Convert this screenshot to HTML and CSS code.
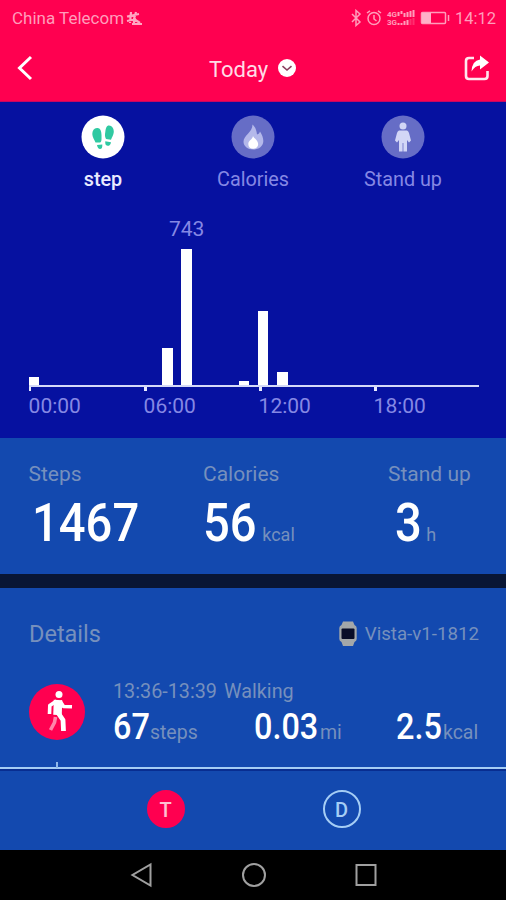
FILE: index.html
```
<!DOCTYPE html>
<html lang="en">
<head>
    <meta charset="UTF-8">
    <meta name="viewport" content="width=device-width, initial-scale=1.0">
    <title>Today</title>
    <link rel="stylesheet" href="styles.css">
</head>
<body>
    <header class="header">
        <div class="statusbar">
            <span class="carrier">China Telecom</span>
            <svg class="carrier-icon" width="17" height="15" viewBox="0 0 17 15">
                <path d="M1 5.500 L13 3 M5 1 L4 12 M10 1 L8 8 L14 12 M1 10 L10 8 M6 13 L16 13 M8 9 L8 13" />
            </svg>
            <svg class="status-icons" width="102" height="18" viewBox="0 0 102 18">
                <path d="M2 5 L10 13 L6 16.5 V1.500 L10 5 L2 13" />
                <circle cx="24" cy="9.500" r="6" />
                <path d="M24 6 V10 L26.500 12 M17 4 L20 1.800 M28 1.800 L31 4" />
                <text x="37" y="8">4G</text>
                <text x="37" y="16">3G</text>
                <path class="bars" d="M48.500 3 V7 M51.500 2 V5 M54.500 4 V8 M57.500 3 V8 M60.500 2 V8 M63.500 1 V8 M48.500 14 V16 M51.500 14 V16 M54.500 12 V16 M57.500 11 V16" />
                <path class="bars dim" d="M60.500 10 V16 M63.500 9 V16" />
                <rect x="71.500" y="3.500" width="24" height="11" rx="1" />
                <rect class="charge" x="72" y="4" width="9" height="10" />
                <path d="M98.500 6 V12" />
            </svg>
            <span class="clock">14:12</span>
        </div>
        <div class="titlebar">
            <svg width="18" height="28" viewBox="0 0 18 28">
                <path class="back" d="M15 3 L3.500 14 L15 25" />
            </svg>
            <div class="title">
                <span>Today</span>
                <svg width="18" height="18" viewBox="0 0 18 18">
                    <circle cx="9" cy="9" r="9" fill="#fff" />
                    <path class="chevron" d="M4.500 7.200 L9 11 L13.500 7.200" />
                </svg>
            </div>
            <svg width="28" height="28" viewBox="0 0 28 28">
                <path class="share-box" d="M11 4 H6 Q3 4 3 7 V22 Q3 25 6 25 H21.500 Q24.500 25 24.500 22 V17" />
                <path class="share-arrow" d="M17 1.500 L26 8.500 L17 15.500 V11.500 Q12 11.500 8.500 17.500 Q9 6.500 17 5.500 Z" />
            </svg>
        </div>
    </header>

    <section class="activity">
        <div class="tabs">
            <div class="tab active">
                <svg width="44" height="44" viewBox="0 0 44 44">
                    <circle cx="22" cy="22" r="21.500" fill="#fff" />
                    <g class="feet">
                        <path d="M16 13 C19 12.500 20.500 16 20.500 20 C20.500 23 21 27 19 27.500 H14.500 C13.500 25 11.300 22 11.300 19 C11.300 15.500 13 13.300 16 13 Z" />
                        <path d="M28 10.500 C31 10.700 33 13.500 32.800 17 C32.600 20 31 22 30 24.800 L25 24 C23.500 21 24 19 24.300 17 C24.800 13 25.500 10.500 28 10.500 Z" />
                        <path d="M16 30 L21.300 29.500 C21.500 32.500 20.700 34 19 34 C17.500 34 16.500 32.500 16 30 Z" />
                        <path d="M24.300 26.300 L30 27.200 C29.500 30 28 31 26.500 30.800 C24.500 30.500 24 29 24.300 26.300 Z" />
                    </g>
                </svg>
                <span>step</span>
            </div>
            <div class="tab">
                <svg width="44" height="44" viewBox="0 0 44 44">
                    <circle class="disc" cx="22" cy="22" r="21.500" />
                    <path class="flame" d="M21.500 9.500 C24.500 12 25.500 15.500 26 19.500 C27.800 19 28.500 18 29 16.500 C31 19.500 32.500 23 32.300 26.500 C32 31.500 27.500 34.500 22.500 34.500 C16.500 34.500 12.500 31 12.500 26.500 C12.500 20.500 21.500 17.500 21.500 9.500 Z" />
                    <path class="flame-core" d="M22 21 C22.500 23 27 25 27.200 29 C27.200 32 25 33.800 22.200 33.800 C19 33.800 17.300 31.800 17.300 29 C17.300 25.500 21.500 24.500 22 21 Z" />
                </svg>
                <span>Calories</span>
            </div>
            <div class="tab">
                <svg width="44" height="44" viewBox="0 0 44 44">
                    <circle class="disc" cx="22" cy="22" r="21.500" />
                    <g class="person">
                        <circle cx="22" cy="11" r="3.500" />
                        <path d="M18 15.500 H26 Q27.500 16 28 18 L30 25.500 L28 27.500 L26 25 V36.500 H22.400 V28 H21.600 V36.500 H18 V25 L16 27.500 L14 25.500 L16 18 Q16.500 16 18 15.500 Z" />
                    </g>
                </svg>
                <span>Stand up</span>
            </div>
        </div>
        <div class="chart">
            <div class="bars-row" id="bars"></div>
            <div class="axis">
                <span>00:00</span>
                <span>06:00</span>
                <span>12:00</span>
                <span>18:00</span>
            </div>
        </div>
    </section>

    <section class="summary">
        <div class="stat">
            <span class="label">Steps</span>
            <div class="value first"><b>1467</b></div>
        </div>
        <div class="stat">
            <span class="label">Calories</span>
            <div class="value"><b>56</b><i>kcal</i></div>
        </div>
        <div class="stat">
            <span class="label">Stand up</span>
            <div class="value last"><b>3</b><i>h</i></div>
        </div>
    </section>

    <section class="details">
        <div class="details-head">
            <h2>Details</h2>
            <div class="device">
                <svg width="18" height="26" viewBox="0 0 18 26">
                    <path d="M4 0.500 H14 L15.500 4 Q17.700 5 17.700 7 V18 Q17.700 20 15.500 21 L14 25 H4 L2.500 21 Q0.300 20 0.300 18 V7 Q0.300 5 2.500 4 Z" fill="#a3a7a9" />
                    <rect x="2.500" y="7.500" width="13" height="10.500" rx="1" fill="#080d28" />
                </svg>
                <span>Vista-v1-1812</span>
            </div>
        </div>
        <div class="entry">
            <div class="entry-icon">
                <svg width="56" height="56" viewBox="0 0 56 56">
                    <circle cx="28" cy="28" r="28" fill="#ff0050" />
                    <circle cx="30" cy="10.500" r="3.500" fill="#fff" />
                    <path class="leg-back" d="M26.500 33 L25.500 38.500 L21.500 46" />
                    <path class="leg" d="M28.500 28 L34 36 L34.500 47" />
                    <path class="torso" d="M29 16 L28.500 31" />
                    <path class="arm" d="M27.500 17 L20.800 21.500 L20.500 30 M31 17 L34.500 22.500 L43 22.800" />
                </svg>
            </div>
            <div class="entry-body">
                <div class="entry-time">13:36-13:39<span>Walking</span></div>
                <div class="entry-values">
                    <div class="small-value steps"><b>67</b><i>steps</i></div>
                    <div class="small-value miles"><b>0.03</b><i>mi</i></div>
                    <div class="small-value kcal"><b>2.5</b><i>kcal</i></div>
                </div>
            </div>
        </div>
        <div class="timeline"></div>
    </section>

    <footer class="switcher">
        <span class="round selected">T</span>
        <span class="round">D</span>
    </footer>

    <nav class="navbar">
        <svg width="24" height="26" viewBox="0 0 24 26">
            <path d="M20.500 2.500 V23.500 L2.500 13 Z" />
        </svg>
        <svg width="26" height="26" viewBox="0 0 26 26">
            <circle cx="13" cy="13" r="11" />
        </svg>
        <svg width="24" height="26" viewBox="0 0 24 26">
            <rect x="2.500" y="3" width="19" height="20" />
        </svg>
    </nav>

    <script>
        const bars = document.getElementById('bars');
        const steps = { 0: 46, 7: 204, 8: 743, 11: 23, 12: 402, 13: 69 };
        const best = Math.max(...Object.values(steps));
        for (let hour = 0; hour < 24; hour++) {
            const bar = document.createElement('div');
            bar.className = 'bar';
            bar.style.height = `${(steps[hour] || 0) / best * 100}%`;
            if (steps[hour] === best) {
                bar.innerHTML = `<span class="bar-label">${best}</span>`;
            }
            bars.appendChild(bar);
        }
    </script>
</body>
</html>
```
FILE: styles.css
```
* {
    box-sizing: border-box;
}
body {
    margin: 0;
    width: 506px;
    height: 900px;
    overflow: hidden;
    font-family: Roboto, "Liberation Sans", sans-serif;
    background-color: #1349af;
    color: #fff;
}
svg {
    display: block;
    flex: none;
    fill: none;
}
b {
    font-weight: 500;
}
i {
    font-style: normal;
}
.header {
    height: 102px;
    background-color: #ff0050;
    border-bottom: 1px solid #c50862;
}
.statusbar {
    display: flex;
    align-items: center;
    height: 36px;
    padding: 0 10px 0 12px;
    color: #ff9dbb;
    font-size: 17px;
}
.carrier-icon {
    margin-left: 2px;
    stroke: #ffa5c1;
    stroke-width: 2.2;
}
.status-icons {
    margin-left: auto;
    stroke: #ff9dbb;
    stroke-width: 1.5;
}
.status-icons text {
    fill: #ff9dbb;
    stroke: none;
    font-size: 8px;
    font-weight: 700;
}
.status-icons .bars {
    stroke-width: 2;
}
.status-icons .dim {
    opacity: 0.3;
}
.status-icons .charge {
    fill: #ffb0c8;
    stroke: none;
}
.clock {
    width: 41px;
    margin-left: 3px;
    font-size: 16.5px;
}
.titlebar {
    display: flex;
    align-items: center;
    justify-content: space-between;
    height: 64px;
    padding: 0 15px 0 16px;
}
.title {
    display: flex;
    align-items: center;
    gap: 10px;
    margin-left: 8px;
    font-size: 22px;
    color: #ffdce6;
}
.title span {
    padding-top: 3px;
}
.back {
    stroke: #fff;
    stroke-width: 3;
}
.chevron {
    stroke: #8a4060;
    stroke-width: 1.6;
}
.share-box {
    stroke: #ffe6ee;
    stroke-width: 2.6;
}
.share-arrow {
    fill: #fff;
}
.activity {
    height: 336px;
    padding: 13px 28px 0;
    background-color: #0611a0;
}
.tabs {
    display: grid;
    grid-template-columns: repeat(3, 1fr);
}
.tab {
    display: flex;
    flex-direction: column;
    align-items: center;
    gap: 9px;
    font-size: 19.8px;
    line-height: 24px;
    color: #8588e4;
}
.tab.active {
    color: #e9ebff;
    font-weight: 500;
}
.feet {
    fill: #2fc9a1;
}
.disc {
    fill: #666dc6;
}
.flame {
    fill: #b4b8ea;
}
.flame-core {
    fill: #fff;
}
.person {
    fill: #d2d6f6;
}
.chart {
    width: 450px;
    margin-left: 0.6px;
    padding-top: 57px;
}
.bars-row {
    display: grid;
    grid-template-columns: repeat(24, 1fr);
    column-gap: 8.6px;
    align-items: end;
    height: 136px;
}
.bar {
    position: relative;
    background-color: #fff;
}
.bar-label {
    position: absolute;
    bottom: 100%;
    left: 50%;
    transform: translateX(-50%);
    margin-bottom: 8px;
    font-size: 21px;
    color: #8588e4;
}
.axis {
    display: grid;
    grid-template-columns: repeat(4, 115px);
    width: 450px;
    border-top: 2px solid #d5d9f8;
    font-size: 21px;
    line-height: 24px;
    color: #8588e4;
}
.axis span::before {
    content: "";
    display: block;
    width: 3px;
    height: 4px;
    margin-bottom: 3px;
    background-color: #e9ebff;
}
.axis span:first-child::before {
    width: 2px;
}
.summary {
    display: grid;
    grid-template-columns: 174.5px 185px 1fr;
    height: 136px;
    padding: 23px 0 0 28.5px;
}
.label {
    display: block;
    font-size: 21px;
    line-height: 26px;
    color: #7690bd;
}
.value {
    display: flex;
    align-items: baseline;
    height: 60px;
    margin-top: 6px;
    line-height: 60px;
}
.value b {
    font-size: 53px;
    transform: scaleX(0.89);
    transform-origin: left;
}
.value i {
    margin-left: -1px;
    font-size: 18px;
    color: #7690bd;
}
.value.first {
    padding-left: 3px;
}
.value.last {
    padding-left: 7px;
}
.value.last i {
    margin-left: 1px;
}
.details {
    border-top: 14px solid #091635;
    height: 195px;
}
.details-head {
    display: flex;
    align-items: center;
    justify-content: space-between;
    height: 91px;
    padding: 0 27px 0 29px;
    color: #7690bd;
}
.details-head h2 {
    margin: 0;
    font-size: 23.5px;
    font-weight: 400;
}
.device {
    display: flex;
    align-items: center;
    gap: 8px;
    font-size: 18.7px;
}
.entry {
    display: flex;
    gap: 28px;
    height: 83px;
    padding: 0 27px 0 29px;
}
.entry-icon {
    padding-top: 5px;
}
.leg-back {
    stroke: #ff86ab;
    stroke-width: 3.6;
}
.leg {
    stroke: #fff;
    stroke-width: 4.8;
    stroke-linejoin: round;
}
.torso {
    stroke: #fff;
    stroke-width: 8.5;
}
.arm {
    stroke: #fff;
    stroke-width: 3.6;
    stroke-linejoin: round;
}
.entry-body {
    flex: 1;
    color: #7690bd;
}
.entry-time {
    font-size: 19.8px;
    line-height: 26px;
}
.entry-time span {
    margin-left: 7px;
}
.entry-values {
    display: grid;
    grid-template-columns: 141px 142px 1fr;
    line-height: 44px;
}
.small-value {
    display: flex;
    align-items: baseline;
    font-size: 19.5px;
    white-space: nowrap;
}
.small-value b {
    font-size: 36px;
    color: #fff;
    transform: scaleX(0.9);
    transform-origin: left;
}
.small-value i {
    margin-left: -4px;
}
.small-value.miles i {
    margin-left: -5.5px;
}
.timeline {
    height: 7px;
    border-bottom: 2px solid #a5cdf5;
}
.timeline::before {
    content: "";
    display: block;
    width: 2px;
    height: 6px;
    margin-left: 56px;
    background-color: #8fb8ea;
}
.switcher {
    display: flex;
    justify-content: center;
    gap: 138px;
    height: 81px;
    padding: 19px 0 0 1px;
    border-top: 2px solid #082d90;
}
.round {
    width: 38px;
    height: 38px;
    border: 2px solid #a5cdf5;
    border-radius: 50%;
    color: #a5cdf5;
    font-size: 20px;
    font-weight: 500;
    line-height: 36px;
    text-align: center;
}
.round.selected {
    border-color: #ff0050;
    background-color: #ff0050;
    color: #ffc0d2;
}
.navbar {
    display: flex;
    justify-content: center;
    gap: 87px;
    height: 50px;
    padding: 12px 0 0 1px;
    background-color: #000;
    stroke: #a0a0a0;
    stroke-width: 2;
}
```
